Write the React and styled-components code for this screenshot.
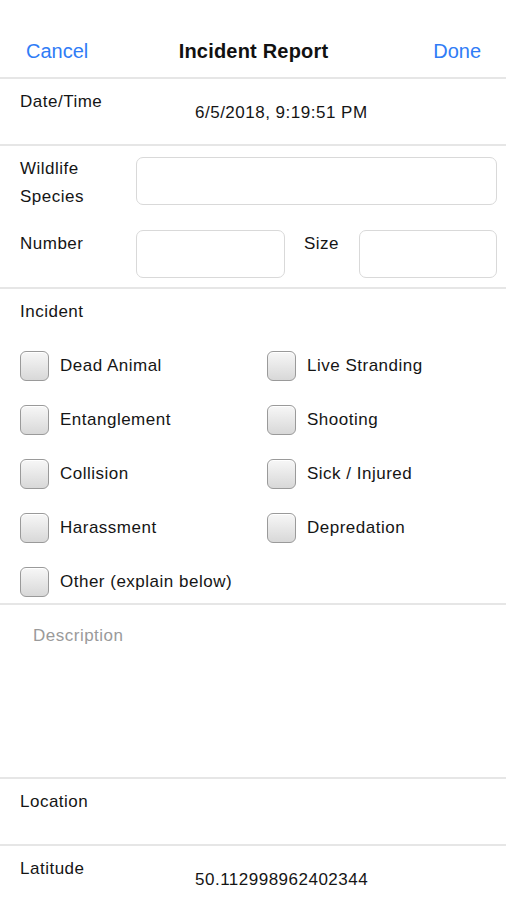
import React from 'react';
import styled, { createGlobalStyle } from 'styled-components';

const GlobalStyle = createGlobalStyle`
  html, body {
    margin: 0;
    padding: 0;
    background: #fff;
  }
  body {
    font-family: "Liberation Sans", Arial, Helvetica, sans-serif;
    color: #111;
    overflow: hidden;
  }
`;

const Screen = styled.div`
  width: 506px;
  min-height: 900px;
  background: #fff;
  padding-top: 26px;
`;

const NavBar = styled.div`
  display: grid;
  grid-template-columns: 1fr auto 1fr;
  align-items: center;
  height: 53px;
  padding: 0 25px 0 26px;
  border-bottom: 2px solid #e6e6e6;
  box-sizing: border-box;
`;

const NavButton = styled.button`
  background: none;
  border: none;
  padding: 0;
  font-family: inherit;
  font-size: 20px;
  color: #2f7cf6;
  cursor: pointer;
  justify-self: ${(p) => (p.$right ? 'end' : 'start')};
`;

const Title = styled.div`
  font-size: 20px;
  font-weight: 700;
  letter-spacing: 0.2px;
  color: #111;
`;

const Section = styled.div`
  border-bottom: 2px solid #e6e6e6;
  padding: ${(p) => p.$pad || '0 20px'};
  height: ${(p) => p.$h || 'auto'};
  box-sizing: border-box;
`;

const Label = styled.div`
  font-size: 17px;
  letter-spacing: 0.5px;
  line-height: 28px;
  color: #151515;
`;

const InfoRow = styled(Section)`
  display: grid;
  grid-template-columns: 175px 1fr;
  padding: 9px 20px 0;
`;

const Value = styled.div`
  font-size: 17px;
  letter-spacing: 0.5px;
  line-height: 28px;
  color: #151515;
  margin-top: 11px;
`;

const FieldGrid = styled.div`
  display: grid;
  grid-template-columns: 116px 149px 74px 138px;
  row-gap: 19px;
  padding-top: 9px;
`;

const TextBox = styled.div`
  height: 48px;
  border: 1.5px solid #d9d9d9;
  border-radius: 7px;
  box-sizing: border-box;
  grid-column: ${(p) => p.$span || 'auto'};
  margin-top: ${(p) => p.$mt || '0'};
`;

const SizeLabel = styled(Label)`
  padding-left: 19px;
`;

const CheckGrid = styled.div`
  display: grid;
  grid-template-columns: 247px 1fr;
  row-gap: 24px;
  margin-top: 25px;
`;

const CheckItem = styled.label`
  display: flex;
  align-items: center;
  gap: 11px;
  height: 30px;
  font-size: 17px;
  letter-spacing: 0.5px;
  color: #151515;
`;

const Box = styled.span`
  width: 29px;
  height: 30px;
  box-sizing: border-box;
  border: 1.5px solid #9a9a9a;
  border-radius: 6px;
  background: linear-gradient(to bottom, #f7f7f7 0%, #e6e6e6 55%, #d8d8d8 100%);
  box-shadow: inset 0 1px 0 #fff;
  flex-shrink: 0;
`;

const Placeholder = styled.div`
  font-size: 17px;
  letter-spacing: 0.5px;
  color: #9a9a9a;
  padding: 21px 0 0 33px;
`;

const incidents = [
  'Dead Animal',
  'Live Stranding',
  'Entanglement',
  'Shooting',
  'Collision',
  'Sick / Injured',
  'Harassment',
  'Depredation',
  'Other (explain below)',
];

const App = () => {
  return (
    <Screen>
      <GlobalStyle />
      <NavBar>
        <NavButton>Cancel</NavButton>
        <Title>Incident Report</Title>
        <NavButton $right>Done</NavButton>
      </NavBar>

      <InfoRow $h="67px">
        <Label>Date/Time</Label>
        <Value>6/5/2018, 9:19:51 PM</Value>
      </InfoRow>

      <Section $h="143px" $pad="0 9px 0 20px">
        <FieldGrid>
          <Label>
            Wildlife
            <br />
            Species
          </Label>
          <TextBox $span="2 / 5" $mt="2px" />
          <Label>Number</Label>
          <TextBox />
          <SizeLabel>Size</SizeLabel>
          <TextBox />
        </FieldGrid>
      </Section>

      <Section $h="316px" $pad="9px 20px 0">
        <Label>Incident</Label>
        <CheckGrid>
          {incidents.map((name) => (
            <CheckItem key={name}>
              <Box />
              {name}
            </CheckItem>
          ))}
        </CheckGrid>
      </Section>

      <Section $h="174px" $pad="0">
        <Placeholder>Description</Placeholder>
      </Section>

      <Section $h="67px" $pad="9px 20px 0">
        <Label>Location</Label>
      </Section>

      <InfoRow $h="67px">
        <Label>Latitude</Label>
        <Value>50.112998962402344</Value>
      </InfoRow>
    </Screen>
  );
};

export default App;
